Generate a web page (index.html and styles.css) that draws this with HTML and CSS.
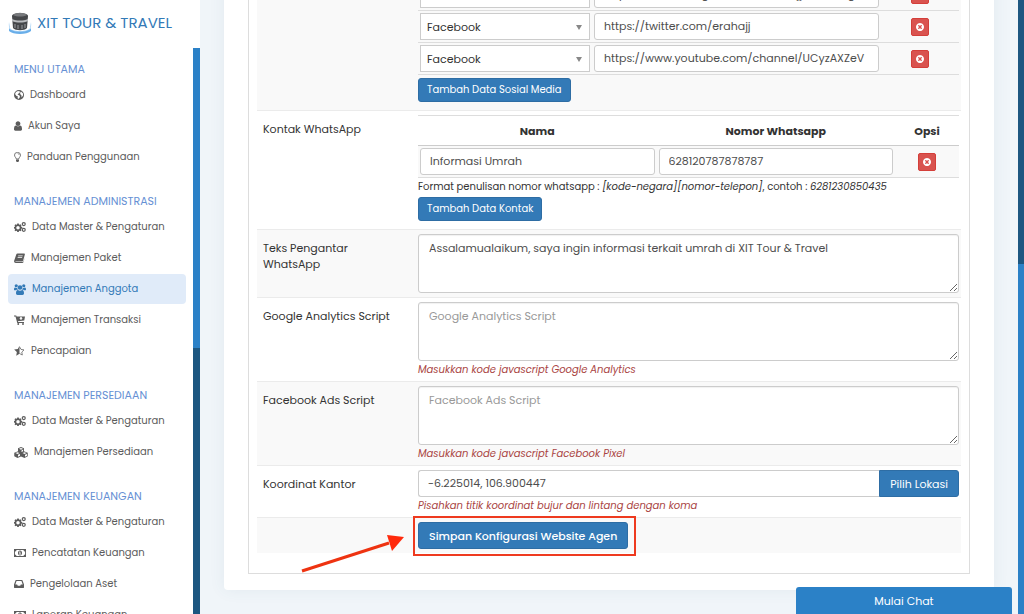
FILE: index.html
```html
<!DOCTYPE html>
<html lang="id">
<head>
<meta charset="utf-8">
<meta name="viewport" content="width=device-width, initial-scale=1">
<title>XIT Tour &amp; Travel</title>
<link rel="stylesheet" href="styles.css">
</head>
<body>
<svg class="sprite" aria-hidden="true">
  <symbol id="i-close" viewBox="128 128 1536 1536"><path d="M1277 1122q0-26-19-45l-181-181 181-181q19-19 19-45 0-27-19-46l-90-90q-19-19-46-19-26 0-45 19l-181 181-181-181q-19-19-45-19-27 0-46 19l-90 90q-19 19-19 46 0 26 19 45l181 181-181 181q-19 19-19 45 0 27 19 46l90 90q19 19 46 19 26 0 45-19l181-181 181 181q19 19 45 19 27 0 46-19l90-90q19-19 19-46zm387-226q0 209-103 385.5t-279.5 279.5-385.5 103-385.5-103-279.5-279.5-103-385.5 103-385.5 279.5-279.5 385.5-103 385.5 103 279.5 279.5 103 385.5z"/></symbol>
  <symbol id="i-cogs" viewBox="0 0 24 20"><path fill-rule="evenodd" d="M6.5 3h3l.5 2 1.300.6L13 4.500l2 2-1 1.800.6 1.300 2 .4v3l-2 .5-.6 1.300 1 1.700-2 2-1.700-1.100-1.300.6-.5 2h-3l-.5-2-1.300-.6L3 18.500l-2-2 1.100-1.700-.6-1.300L0 13v-3l1.500-.4.6-1.300L1 6.500l2-2 1.700 1.100L6 5zM8 8a3.500 3.500 0 1 0 0 7 3.500 3.500 0 0 0 0-7z"/><path fill-rule="evenodd" d="M19.500 0a4.200 4.200 0 1 1 0 8.400 4.200 4.200 0 0 1 0-8.400zm0 2.400a1.800 1.800 0 1 0 0 3.600 1.800 1.800 0 0 0 0-3.600zM19.500 11.400a4.200 4.200 0 1 1 0 8.400 4.200 4.200 0 0 1 0-8.400zm0 2.400a1.800 1.800 0 1 0 0 3.600 1.800 1.800 0 0 0 0-3.600z"/></symbol>
  <symbol id="i-money" viewBox="0 0 24 16"><path fill-rule="evenodd" d="M0 0h24v16H0zM5 1.800A3.500 3.500 0 0 1 1.800 5v6A3.500 3.500 0 0 1 5 14.200h14A3.500 3.500 0 0 1 22.200 11V5A3.500 3.500 0 0 1 19 1.800zM12 3c2.500 0 4 2.300 4 5s-1.500 5-4 5-4-2.300-4-5 1.500-5 4-5zm-.8 2L9.800 6.200l.7.8.7-.5V9.600h-1.200v1.200h4V9.600h-1.200V5z"/></symbol>
</svg>

<div class="app">
  <aside class="sidebar">
    <a class="brand" href="#">
      <svg class="brand-logo" viewBox="0 0 24 24" aria-hidden="true">
        <path d="M1 11C0 19 3 21 12 21s12-2 11-10l-1 6c-1 2-4 3-10 3S3 19 2 17z" fill="#a8d2f5"/>
        <path d="M1 17c3 5 19 5 22 0v3c-4 4-18 4-22 0z" fill="#69aee9"/>
        <path d="M4 5c0-4 16-4 16 0l-1 12c-2 3-12 3-14 0z" fill="#45474a"/>
        <path d="M5 4c4-3 10-3 14 0-4 2-10 2-14 0z" fill="#77797c"/>
        <path d="M4 8c5 2 11 2 16 0v2c-5 2-11 2-16 0z" fill="#b9bbbe"/>
        <path d="M7 13v4M10 14v4M14 14v4M17 13v4" stroke="#999b9e" stroke-width="1"/>
      </svg>
      <span>XIT TOUR &amp; TRAVEL</span>
    </a>
    <div class="sidebar-body">
      <nav class="menu">
        <section class="menu-group">
          <h2>MENU UTAMA</h2>
          <a href="#"><svg width="10" height="10" viewBox="0 0 20 20"><path fill-rule="evenodd" d="M10 0a10 10 0 1 1 0 20 10 10 0 0 1 0-20zM8 2 4 4 2 8l3 4 3 1-1 3 2 2 3-4-1-3-4-2 2-2 2-1 1-3zm6 1-2 3 1 3 2 2v4l3-4V7z"/></svg>Dashboard</a>
          <a href="#"><svg width="8" height="10" viewBox="256 128 1280 1536"><path d="M1536 1399q0 109-62.500 187t-150.500 78h-854q-88 0-150.500-78t-62.500-187q0-85 8.500-160.500t31.500-152 58.500-131 94-89 134.500-34.500q131 128 313 128t313-128q76 0 134.500 34.500t94 89 58.500 131 31.500 152 8.500 160.500zm-256-887q0 159-112.500 271.500t-271.500 112.500-271.500-112.500-112.500-271.500 112.500-271.500 271.500-112.500 271.500 112.500 112.500 271.500z"/></svg>Akun Saya</a>
          <a href="#"><svg width="7" height="10" viewBox="0 0 14 20"><path d="M4.500 14c0-3-3.500-4-3.500-8a6 5.200 0 0 1 12 0c0 4-3.500 5-3.500 8z" fill="none" stroke="currentColor" stroke-width="1.600"/><path d="M4 15h6v3.500L8 20H6l-2-1.500zM7 3c2.500 0 4 1.200 4 3h-1.200C9.800 5 9 4.200 7 4.200z"/></svg>Panduan Penggunaan</a>
        </section>
        <section class="menu-group">
          <h2>MANAJEMEN ADMINISTRASI</h2>
          <a href="#"><svg width="12" height="10"><use href="#i-cogs"/></svg>Data Master &amp; Pengaturan</a>
          <a href="#"><svg width="11" height="10" viewBox="0 0 22 20"><path fill-rule="evenodd" d="M7 1h13.500c1 0 1.500 1 1.200 2l-3.500 12.500c-.3 1-1 1.500-2 1.500H4c-1.500 0-1.500 1 0 1.200h13c1 0 1.800-.5 2-1.500L22 7l-3 11c-.4 1.300-1.200 2-2.500 2H3.500C1 20-.3 17.800.3 15.500L4.500 3c.4-1.200 1.200-2 2.500-2zm1.500 4-.4 1.500h9L17.500 5zm-1 3.200-.4 1.500h9l.4-1.500z"/></svg>Manajemen Paket</a>
          <a class="active" href="#" aria-current="page"><svg width="12" height="11" viewBox="0 0 24 22"><circle cx="4.500" cy="3.500" r="3.200"/><circle cx="19.500" cy="3.500" r="3.200"/><circle cx="12" cy="7" r="4.600"/><path d="M0 11.500C0 8.500.8 7.200 2 7.200c1.500.8 3 1 4.500.6.200 1.700.8 2.700 1.600 3.700H5l-1.500 1H2c-1.300 0-2-.2-2-1zM24 11.500c0-3-.8-4.300-2-4.300-1.500.8-3 1-4.500.6-.2 1.700-.8 2.700-1.600 3.700H19l1.500 1H22c1.300 0 2-.2 2-1zM4 18.500c0-4 1-6.500 3.700-6.500 2.800 1.800 5.800 1.800 8.600 0 2.700 0 3.700 2.500 3.700 6.500 0 2-1.200 3.500-3 3.500H7c-1.800 0-3-1.500-3-3.500z"/></svg>Manajemen Anggota</a>
          <a href="#"><svg width="11" height="10" viewBox="0 0 22 20"><path fill-rule="evenodd" d="M0 1h4.500l.6 2H22l-1.500 8-12.700 1.500.4 1.500H20v2H6.500L3 3H0zm12.500 3v2.500h-2L14 10l3.500-3.500h-2V4z"/><circle cx="8.500" cy="18" r="1.900"/><circle cx="18" cy="18" r="1.900"/></svg>Manajemen Transaksi</a>
          <a href="#"><svg width="11" height="10" viewBox="0 0 22 20"><path d="M11 0v15.700L4.500 19.500 5.700 12 .3 7l7.300-1z"/><path d="m11 1.500 3 5.300 6 1-4.400 4.300 1 5.900-5.600-3" fill="none" stroke="currentColor" stroke-width="1.500"/></svg>Pencapaian</a>
        </section>
        <section class="menu-group">
          <h2>MANAJEMEN PERSEDIAAN</h2>
          <a href="#"><svg width="12" height="10"><use href="#i-cogs"/></svg>Data Master &amp; Pengaturan</a>
          <a href="#"><svg width="14" height="11" viewBox="0 0 28 22"><path fill-rule="evenodd" d="m14 0 6 2.500v6l7.500 3v7L21 22l-7-3.200L7 22l-6.500-3.500v-7L8 8.500v-6zm0 1.800-4 1.700 4 1.800 4-1.800zm1 5V10l3.200-1.400V5.200zM7 10.500l-4 1.700L7 14l4-1.800zm1 5v4l4-2v-3.700zm13-5-4 1.700 4 1.800 4-1.800zm1 5v4l4-2v-3.700z"/></svg>Manajemen Persediaan</a>
        </section>
        <section class="menu-group">
          <h2>MANAJEMEN KEUANGAN</h2>
          <a href="#"><svg width="12" height="10"><use href="#i-cogs"/></svg>Data Master &amp; Pengaturan</a>
          <a href="#"><svg width="12" height="8"><use href="#i-money"/></svg>Pencatatan Keuangan</a>
          <a href="#"><svg width="10" height="8" viewBox="0 0 20 16"><path fill-rule="evenodd" d="M4.500 0h11c.7 0 1.200.3 1.500 1l3 8v6c0 .6-.4 1-1 1H1c-.6 0-1-.4-1-1V9l3-8c.3-.7.800-1 1.500-1zm.6 2L2.600 9h3.700l1.200 2.600h5L13.700 9h3.700l-2.500-7z"/></svg>Pengelolaan Aset</a>
          <a href="#"><svg width="12" height="8"><use href="#i-money"/></svg>Laporan Keuangan</a>
        </section>
      </nav>
      <div class="track"><div class="thumb"></div></div>
    </div>
  </aside>

  <main class="content">
    <form class="card">
      <div class="panel">
        <table class="settings">
          <tbody>
            <tr>
              <th scope="row" aria-label="Sosial Media"></th>
              <td>
                <table class="entries social">
                  <tbody>
                    <tr>
                      <td><div class="picker"><select aria-label="Jenis sosial media 1"><option>Facebook</option></select></div></td>
                      <td><input type="text" aria-label="Tautan 1" value="https://www.instagram.com/erahajj/?hl=id-group"></td>
                      <td><button class="remove" type="button" aria-label="Hapus"><svg><use href="#i-close"/></svg></button></td>
                    </tr>
                    <tr>
                      <td><div class="picker"><select aria-label="Jenis sosial media 2"><option>Facebook</option></select></div></td>
                      <td><input type="text" aria-label="Tautan 2" value="https://twitter.com/erahajj"></td>
                      <td><button class="remove" type="button" aria-label="Hapus"><svg><use href="#i-close"/></svg></button></td>
                    </tr>
                    <tr>
                      <td><div class="picker"><select aria-label="Jenis sosial media 3"><option>Facebook</option></select></div></td>
                      <td><input type="text" aria-label="Tautan 3" value="https://www.youtube.com/channel/UCyzAXZeV"></td>
                      <td><button class="remove" type="button" aria-label="Hapus"><svg><use href="#i-close"/></svg></button></td>
                    </tr>
                  </tbody>
                </table>
                <button class="btn small" type="button">Tambah Data Sosial Media</button>
              </td>
            </tr>
            <tr>
              <th scope="row">Kontak WhatsApp</th>
              <td>
                <table class="entries contacts">
                  <thead>
                    <tr><th scope="col">Nama</th><th scope="col">Nomor Whatsapp</th><th scope="col">Opsi</th></tr>
                  </thead>
                  <tbody>
                    <tr>
                      <td><input type="text" aria-label="Nama" value="Informasi Umrah"></td>
                      <td><input type="text" aria-label="Nomor Whatsapp" value="628120787878787"></td>
                      <td><button class="remove" type="button" aria-label="Hapus"><svg><use href="#i-close"/></svg></button></td>
                    </tr>
                  </tbody>
                </table>
                <p class="note">Format penulisan nomor whatsapp : <em>[kode-negara][nomor-telepon]</em>, contoh : <em>6281230850435</em></p>
                <button class="btn small" type="button">Tambah Data Kontak</button>
              </td>
            </tr>
            <tr>
              <th scope="row"><label for="intro">Teks Pengantar WhatsApp</label></th>
              <td><textarea id="intro">Assalamualaikum, saya ingin informasi terkait umrah di XIT Tour &amp; Travel</textarea></td>
            </tr>
            <tr>
              <th scope="row"><label for="ga">Google Analytics Script</label></th>
              <td>
                <textarea id="ga" placeholder="Google Analytics Script"></textarea>
                <p class="note hint">Masukkan kode javascript Google Analytics</p>
              </td>
            </tr>
            <tr>
              <th scope="row"><label for="fb">Facebook Ads Script</label></th>
              <td>
                <textarea id="fb" placeholder="Facebook Ads Script"></textarea>
                <p class="note hint">Masukkan kode javascript Facebook Pixel</p>
              </td>
            </tr>
            <tr>
              <th scope="row"><label for="coord">Koordinat Kantor</label></th>
              <td>
                <div class="input-group">
                  <input id="coord" type="text" value="-6.225014, 106.900447">
                  <button class="btn" type="button">Pilih Lokasi</button>
                </div>
                <p class="note hint">Pisahkan titik koordinat bujur dan lintang dengan koma</p>
              </td>
            </tr>
            <tr>
              <th></th>
              <td>
                <div class="submit">
                  <button class="btn" type="submit">Simpan Konfigurasi Website Agen</button>
                  <svg class="arrow" viewBox="0 0 104 40" aria-hidden="true"><path d="M1 37 88 9" stroke="#ee3311" stroke-width="3" fill="none"/><path d="M86 1 103 3 91 17z" fill="#ff2a0c"/></svg>
                </div>
              </td>
            </tr>
          </tbody>
        </table>
      </div>
    </form>
  </main>
  <div class="track page-track"><div class="thumb"></div></div>
</div>
<button class="chat" type="button">Mulai Chat</button>
</body>
</html>
```

FILE: styles.css
```css
* {
  box-sizing: border-box;
}

body {
  margin: 0;
  background: #f0f5f9;
  color: #333;
  font: 11px/16px Poppins, Inter, "Open Sans", sans-serif;
}

button,
input,
select,
textarea {
  font: inherit;
}

.sprite {
  position: absolute;
  width: 0;
  height: 0;
}

.app {
  display: flex;
  height: 100vh;
  overflow: hidden;
}

/* Sidebar */
.sidebar {
  display: flex;
  flex: 0 0 200px;
  flex-direction: column;
  background: #fff;
}

.brand {
  display: flex;
  flex: 0 0 48px;
  align-items: center;
  gap: 5px;
  padding: 0 8px 3px;
  color: #337ab7;
  font-size: 15px;
  line-height: 20px;
  text-decoration: none;
  white-space: nowrap;
}

.brand-logo {
  width: 24px;
  height: 24px;
}

.sidebar-body {
  display: flex;
  flex: 1;
  min-height: 0;
}

.menu {
  flex: 1;
  padding: 10px 7px 0 8px;
  overflow: hidden;
}

.menu-group {
  margin-bottom: 18px;
}

.menu h2 {
  margin: 0;
  padding-left: 6px;
  color: #6690d4;
  font-size: 11px;
  font-weight: 400;
  line-height: 22px;
  white-space: nowrap;
}

.menu a {
  display: flex;
  align-items: center;
  gap: 6px;
  height: 30px;
  margin-bottom: 1px;
  padding-left: 6px;
  border-radius: 4px;
  color: #5c5c5c;
  font-size: 10px;
  text-decoration: none;
  white-space: nowrap;
}

.menu a.active {
  background: #e0ebf9;
  color: #337ab7;
}

.menu svg {
  flex: none;
  fill: currentColor;
}

.track {
  flex: 0 0 7px;
  background: #1d5781;
}

.thumb {
  height: 300px;
  background: #2b81c7;
}

.page-track {
  display: flex;
  flex: 0 0 6px;
  flex-direction: column;
  justify-content: flex-end;
}

.page-track .thumb {
  height: 57%;
}

/* Content, held at its lower end */
.content {
  display: flex;
  flex: 1;
  flex-direction: column;
  justify-content: flex-end;
  min-width: 0;
  padding: 0 24px 24px;
}

.card {
  flex: none;
  padding: 16px 24px;
  border-radius: 4px;
  background: #fff;
  box-shadow: 0 0 16px rgba(70, 100, 130, 0.08);
}

.panel {
  padding: 8px 8px 20px;
  border: 1px solid #ddd;
}

.settings,
.entries {
  width: 100%;
  border-spacing: 0;
  table-layout: fixed;
}

.settings > tbody > tr:nth-child(odd),
.entries > tbody > tr {
  background: #f9f9f9;
}

.settings > tbody > tr > th,
.settings > tbody > tr > td {
  border-top: 1px solid #ebebeb;
  vertical-align: top;
}

.settings > tbody > tr > th {
  width: 157px;
  padding: 10px 30px 4px 6px;
  font-weight: 400;
  text-align: left;
}

.settings label {
  display: block;
  margin-right: -24px;
}

.settings label[for="intro"] {
  margin-right: 0;
}

.settings > tbody > tr > td {
  padding: 4px 2px 4px 4px;
}

.entries td {
  height: 32px;
  padding: 2px;
  border-bottom: 1px solid #ddd;
}

.entries td:last-child {
  text-align: center;
}

.social td:first-child {
  width: 174px;
}

.social td:last-child {
  width: 78px;
}

.contacts th {
  height: 31px;
  padding: 0;
  border-top: 1px solid #ddd;
  border-bottom: 1px solid #ccc;
  font-weight: 700;
  text-align: center;
}

.contacts th:last-child {
  width: 64px;
}

input,
select,
textarea {
  display: block;
  width: 100%;
  margin: 0;
  border: 1px solid #ccc;
  border-radius: 3px;
  background: #fff;
  color: #4d4d4d;
}

input {
  height: 27px;
  padding: 0 9px;
}

select {
  height: 27px;
  padding: 0 6px;
  border-radius: 0;
  appearance: none;
  color: #333;
}

.picker {
  position: relative;
}

.picker::after {
  position: absolute;
  top: 12px;
  right: 8px;
  border: 3px solid transparent;
  border-top: 5px solid #888;
  border-bottom: 0;
  content: "";
}

textarea {
  height: 59px;
  padding: 5px 10px;
  box-shadow: inset 0 1px 1px rgba(0, 0, 0, 0.06);
}

textarea::placeholder {
  color: #999;
}

.note {
  margin: 0;
  padding-top: 2px;
  font-size: 10px;
  line-height: 14px;
  white-space: nowrap;
}

.hint {
  color: #a94442;
  font-style: italic;
}

.btn {
  height: 27px;
  padding: 0 10px;
  border: 1px solid #2e6da4;
  border-radius: 3px;
  background: #337ab7;
  color: #fff;
  white-space: nowrap;
}

.btn.small {
  display: block;
  height: 24px;
  margin: 3px 0 4px;
  padding: 0 8px;
  font-size: 10px;
}

.remove {
  display: inline-flex;
  align-items: center;
  justify-content: center;
  width: 18px;
  height: 18px;
  padding: 0;
  border: 1px solid #d43f3a;
  border-radius: 2px;
  background: #d9534f;
  vertical-align: middle;
}

.remove svg {
  width: 8px;
  height: 8px;
  fill: #fff;
}

.input-group {
  display: flex;
}

.input-group input {
  flex: 1;
  min-width: 0;
  border-right: 0;
  border-radius: 3px 0 0 3px;
}

.input-group .btn {
  border-radius: 0 3px 3px 0;
}

.submit {
  position: relative;
  width: max-content;
}

.submit .btn {
  display: block;
  font-weight: 500;
}

.submit::before {
  position: absolute;
  inset: -6px -8px -7px -5px;
  border: 2px solid #ee3a1f;
  content: "";
}

.arrow {
  position: absolute;
  top: 12px;
  right: calc(100% + 13px);
  width: 104px;
  height: 40px;
}

.chat {
  position: fixed;
  right: 12px;
  bottom: 0;
  width: 216px;
  height: 27px;
  border: 0;
  border-radius: 3px 3px 0 0;
  background: #2b81c7;
  color: #fff;
}
```
